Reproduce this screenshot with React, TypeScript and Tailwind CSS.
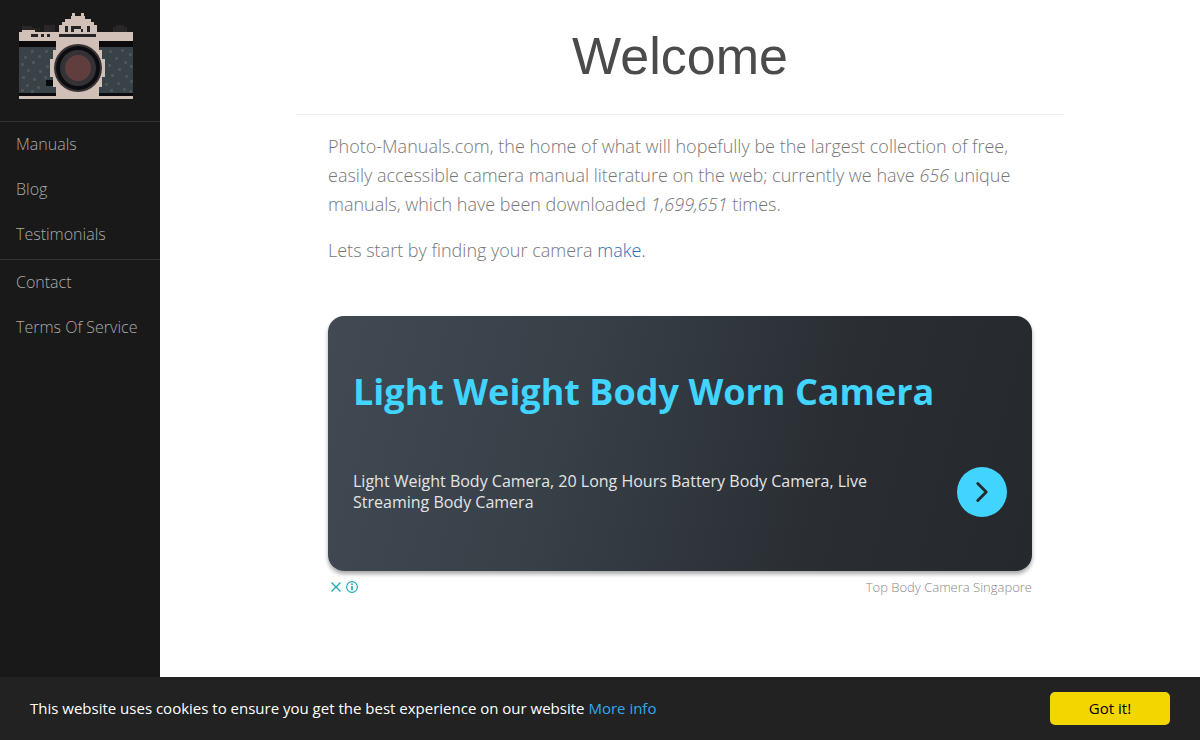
import React, { useState } from "react";
import { ChevronRight } from "lucide-react";

interface NavLink {
  label: string;
  href: string;
}

const mainLinks: NavLink[] = [
  { label: "Manuals", href: "#manuals" },
  { label: "Blog", href: "#blog" },
  { label: "Testimonials", href: "#testimonials" },
];

const infoLinks: NavLink[] = [
  { label: "Contact", href: "#contact" },
  { label: "Terms Of Service", href: "#terms" },
];

// light dots on the leather, left and right of the lens
const leatherDots = [
  [31, 50], [24, 56], [38, 55], [45, 50], [21, 63], [32, 61], [51, 59], [27, 69], [39, 70],
  [46, 65], [22, 76], [33, 78], [44, 76], [26, 84], [37, 86], [31, 90], [21, 89], [46, 83],
  [109, 50], [121, 49], [129, 53], [115, 57], [124, 61], [108, 64], [130, 65], [118, 68],
  [111, 74], [125, 75], [130, 80], [105, 83], [117, 82], [110, 89], [123, 88], [129, 90],
];

const CameraLogo: React.FC = () => (
  <svg width="160" height="120" viewBox="0 0 160 120" shapeRendering="crispEdges" aria-label="Camera">
    {/* dials */}
    <path fill="#2b2627" d="M22 26h10v2h3v4H22zM44 25h11v7H44zM116 25h8v2h3v5h-14v-5h3z" />
    {/* top plate and prism */}
    <path
      fill="#d1c0b7"
      d="M19 32h3v-2h13v2h24v-7h3v-3h3v-3h6v-3h1v-3h3v3h6v-3h3v3h1v3h6v3h3v3h3v7h36v9H19z"
    />
    <path
      fill="#272324"
      d="M65 26h3v6h-3zM71 26h10v3h-7v3h-3zM81 29h2v3h-2zM87 26h3v6h-3zM59 34h37v3H59zM31 34h7v3h-7zM41 34h3v3h-3zM47 34h3v3h-3zM35 28h2v4h-2zM38 28h2v3h-2z"
    />
    {/* body */}
    <path fill="#0b0b0d" d="M19 41h114v6H19zM19 93h114v3H19z" />
    <path fill="#394246" d="M19 47h114v46H19z" />
    <g shapeRendering="auto">
      {leatherDots.map(([x, y]) => (
        <rect key={`${x}-${y}`} x={x} y={y} width="3" height="3" rx="1" fill="#4b575b" />
      ))}
    </g>
    <path fill="#08090b" d="M46 80h8v6h-8z" />
    <path fill="#d1c0b7" d="M19 96h114v3H19z" />
    {/* lens mount */}
    <path
      fill="#d1c0b7"
      d="M56 41h43v9h3v9h3v18h-3v10h-3v10H56V87h-3V77h-3V59h3v-9h3z"
    />
    {/* lens */}
    <g shapeRendering="auto">
      <circle cx="78" cy="68" r="24" fill="#383235" />
      <circle cx="78" cy="68" r="22" fill="#0b0d11" />
      <circle cx="78" cy="68" r="18" fill="#343235" />
      <circle cx="78" cy="68" r="13" fill="#603e3d" />
    </g>
  </svg>
);

const NavGroup: React.FC<{ links: NavLink[] }> = ({ links }) => (
  <ul className="border-t border-[#333] pb-0.5">
    {links.map((link) => (
      <li key={link.label}>
        <a href={link.href} className="block pl-4 text-base leading-[45px] text-[#aaa] hover:text-white">
          {link.label}
        </a>
      </li>
    ))}
  </ul>
);

const AdBanner: React.FC = () => (
  <section className="mt-[51px]">
    <div className="rounded-2xl bg-linear-[105deg,#414953_0%,#373f47_35%,#2a2e33_70%,#25282c_100%] px-[25px] pt-[52px] pb-[54px] shadow-[0_3px_4px_rgba(0,0,0,0.35)]">
      <h2 className="text-[36px] leading-[48px] font-bold text-[#40d4ff]">
        Light Weight Body Worn Camera
      </h2>
      <div className="mt-[51px] flex items-center justify-between">
        <p className="max-w-[540px] text-base leading-[21px] font-normal text-[#e4e4e4]">
          Light Weight Body Camera, 20 Long Hours Battery Body Camera, Live Streaming Body Camera
        </p>
        <button
          type="button"
          aria-label="Open"
          className="flex size-[50px] shrink-0 items-center justify-center rounded-full bg-[#40d4ff] text-[#25282c]"
        >
          <ChevronRight size={34} strokeWidth={2} />
        </button>
      </div>
    </div>
    <div className="mt-[7px] flex items-center justify-between pl-0.5">
      <div className="flex gap-1 text-[#1ba9b9]">
        <button type="button" aria-label="Close ad">
          <svg width="12" height="12" viewBox="0 0 12 12" stroke="currentColor" strokeWidth="1.3">
            <path d="M1.5 1.5l9 9M10.5 1.5l-9 9" />
          </svg>
        </button>
        <button type="button" aria-label="About this ad">
          <svg width="12" height="12" viewBox="0 0 12 12" fill="none" stroke="currentColor">
            <circle cx="6" cy="6" r="5.4" strokeWidth="1.1" />
            <path d="M6 5v4.3M6 2.6v1.5" strokeWidth="1.6" />
          </svg>
        </button>
      </div>
      <a href="#ad" className="text-[13px] leading-[18px] font-light text-[#888]">
        Top Body Camera Singapore
      </a>
    </div>
  </section>
);

const CookieBar: React.FC<{ onAccept: () => void }> = ({ onAccept }) => (
  <div className="fixed inset-x-0 bottom-0 flex items-center justify-between bg-[#222] px-[30px] py-[15px] text-[15px] font-normal text-white">
    <p>
      This website uses cookies to ensure you get the best experience on our website{" "}
      <a href="#cookies" className="text-[#31a8f0]">
        More info
      </a>
    </p>
    <button
      type="button"
      onClick={onAccept}
      className="h-[33px] w-[120px] rounded-[5px] bg-[#f1d600] text-black"
    >
      Got it!
    </button>
  </div>
);

export default function App() {
  const [showCookies, setShowCookies] = useState(true);

  return (
    <div className="flex min-h-screen bg-white font-['Open_Sans',sans-serif] font-light text-[#777]">
      <aside className="w-40 shrink-0 bg-[#191919]">
        <a href="#home" className="block h-[121px]">
          <CameraLogo />
        </a>
        <nav>
          <NavGroup links={mainLinks} />
          <NavGroup links={infoLinks} />
        </nav>
      </aside>

      <main className="min-w-0 flex-1">
        <div className="mx-auto max-w-3xl">
          <header className="border-b border-[#eee] pt-[26px] pb-7 text-center">
            <h1 className="font-['Liberation_Sans',sans-serif] text-[52px] leading-[60px] font-normal text-[#4b4b4b]">
              Welcome
            </h1>
          </header>
          <div className="px-8 pt-[17px]">
            <p className="text-[18px] leading-[29px]">
              Photo-Manuals.com, the home of what will hopefully be the largest collection of free,
              easily accessible camera manual literature on the web; currently we have <em>656</em> unique
              manuals, which have been downloaded <em>1,699,651</em> times.
            </p>
            <p className="mt-[17px] text-[18px] leading-[29px]">
              Lets start by finding your camera{" "}
              <a href="#make" className="text-[#1f72b4]">
                make.
              </a>
            </p>
            <AdBanner />
          </div>
        </div>
      </main>

      {showCookies && <CookieBar onAccept={() => setShowCookies(false)} />}
    </div>
  );
}
